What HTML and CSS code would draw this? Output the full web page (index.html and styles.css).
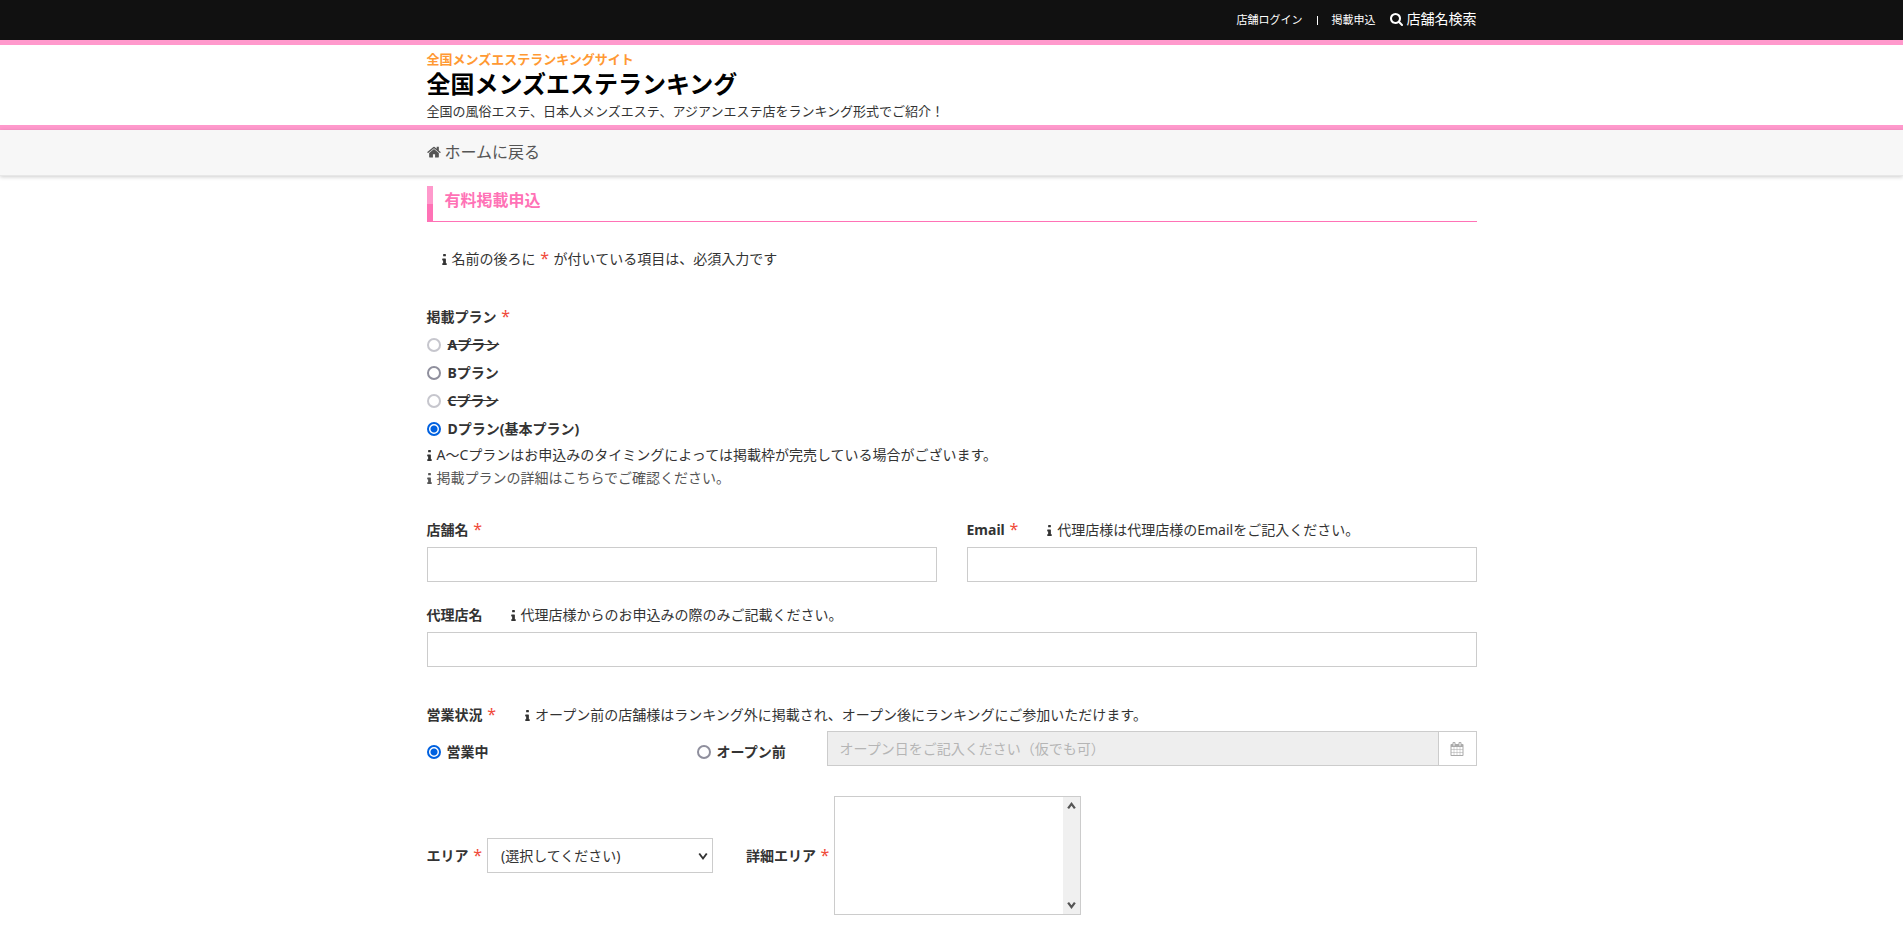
FILE: index.html
```html
<!DOCTYPE html>
<html lang="ja">
<head>
<meta charset="utf-8">
<meta name="viewport" content="width=device-width, initial-scale=1">
<title>有料掲載申込 | 全国メンズエステランキング</title>
<link rel="stylesheet" href="styles.css">
</head>
<body>
<svg class="sprite" aria-hidden="true">
  <symbol id="icon-info" viewBox="0 0 640 1536"><path d="M640 1344v128q0 26-19 45t-45 19H64q-26 0-45-19t-19-45v-128q0-26 19-45t45-19h64V896H64q-26 0-45-19T0 832V704q0-26 19-45t45-19h384q26 0 45 19t19 45v576h64q26 0 45 19t19 45zM512 64v192q0 26-19 45t-45 19H192q-26 0-45-19t-19-45V64q0-26 19-45T192 0h256q26 0 45 19t19 45z"/></symbol>
  <symbol id="icon-search" viewBox="0 0 1664 1664"><path d="M1152 704q0-185-131.500-316.500T704 256 387.500 387.500 256 704t131.500 316.500T704 1152t316.500-131.500T1152 704zm512 832q0 52-38 90t-90 38q-54 0-90-38l-343-342q-179 124-399 124-143 0-273.500-55.500t-225-150-150-225T0 704t55.500-273.500 150-225 225-150T704 0t273.500 55.500 225 150 150 225T1408 704q0 220-124 399l343 343q37 37 37 90z"/></symbol>
  <symbol id="icon-home" viewBox="0 0 1664 1312"><path d="M1408 768v480q0 26-19 45t-45 19H960V928H704v384H320q-26 0-45-19t-19-45V768q0-1 .5-3t.5-3l575-474 575 474q1 2 1 6zm223-69l-62 74q-8 9-21 11h-3q-13 0-21-7L832 200 140 777q-12 8-24 7-13-2-21-11l-62-74q-8-10-7-23.500T37 654L756 55q32-26 76-26t76 26l244 204V64q0-14 9-23t23-9h192q14 0 23 9t9 23v408l219 182q10 8 11 21.500t-7 23.500z"/></symbol>
  <symbol id="icon-calendar" viewBox="0 0 1664 1792"><path d="M128 1664h288v-288H128v288zm352 0h320v-288H480v288zm-352-352h288V992H128v320zm352 0h320V992H480v320zM128 928h288V640H128v288zm736 736h320v-288H864v288zM480 928h320V640H480v288zm768 736h288v-288h-288v288zm-384-352h320V992H864v320zM512 448V160q0-32-32-32h-64q-32 0-32 32v288q0 32 32 32h64q32 0 32-32zm736 864h288V992h-288v320zM864 928h320V640H864v288zm384 0h288V640h-288v288zm32-480V160q0-32-32-32h-64q-32 0-32 32v288q0 32 32 32h64q32 0 32-32zm384-64v1280q0 52-38 90t-90 38H128q-52 0-90-38t-38-90V384q0-52 38-90t90-38h128v-96q0-66 47-113T416 0h64q66 0 113 47t47 113v96h384v-96q0-66 47-113t113-47h64q66 0 113 47t47 113v96h128q52 0 90 38t38 90z"/></symbol>
  <symbol id="icon-up" viewBox="0 0 8 8"><path d="M1 6.500l3-4 3 4" fill="none" stroke="currentColor" stroke-width="2"/></symbol>
  <symbol id="icon-down" viewBox="0 0 8 8"><path d="M1 1.500l3 4 3-4" fill="none" stroke="currentColor" stroke-width="2"/></symbol>
  <symbol id="icon-caret" viewBox="0 0 8 8"><path d="M1 2l3 4 3-4" fill="none" stroke="currentColor" stroke-width="1.500"/></symbol>
</svg>

<div class="topbar">
  <nav class="container topbar-nav">
    <a href="#">店舗ログイン</a>
    <span class="divider"></span>
    <a href="#">掲載申込</a>
    <a class="search" href="#"><svg><use href="#icon-search"/></svg>店舗名検索</a>
  </nav>
</div>

<header class="site-header">
  <div class="container">
    <p class="tagline">全国メンズエステランキングサイト</p>
    <p class="site-name">全国メンズエステランキング</p>
    <p class="summary">全国の風俗エステ、日本人メンズエステ、アジアンエステ店をランキング形式でご紹介！</p>
  </div>
</header>

<nav class="breadcrumb">
  <div class="container">
    <a class="home" href="#"><svg><use href="#icon-home"/></svg>ホームに戻る</a>
  </div>
</nav>

<main class="container">
  <h1 class="heading">有料掲載申込</h1>
  <p class="note lead"><svg class="info"><use href="#icon-info"/></svg>名前の後ろに <span class="required">*</span> が付いている項目は、必須入力です</p>

  <form>
    <fieldset class="plans">
      <legend>掲載プラン <span class="required">*</span></legend>
      <label class="choice struck"><input type="radio" name="plan" disabled><span>Aプラン</span></label>
      <label class="choice"><input type="radio" name="plan"><span>Bプラン</span></label>
      <label class="choice struck"><input type="radio" name="plan" disabled><span>Cプラン</span></label>
      <label class="choice"><input type="radio" name="plan" checked><span>Dプラン(基本プラン)</span></label>
      <p class="note"><svg class="info"><use href="#icon-info"/></svg>A～Cプランはお申込みのタイミングによっては掲載枠が完売している場合がございます。</p>
      <p class="note"><a href="#"><svg class="info"><use href="#icon-info"/></svg>掲載プランの詳細はこちらでご確認ください。</a></p>
    </fieldset>

    <div class="columns">
      <div class="field">
        <div class="caption"><label for="shop">店舗名 <span class="required">*</span></label></div>
        <input class="text" id="shop" type="text">
      </div>
      <div class="field">
        <div class="caption"><label for="email">Email <span class="required">*</span></label><span class="hint"><svg class="info"><use href="#icon-info"/></svg>代理店様は代理店様のEmailをご記入ください。</span></div>
        <input class="text" id="email" type="email">
      </div>
    </div>

    <div class="field agency">
      <div class="caption"><label for="agency">代理店名</label><span class="hint"><svg class="info"><use href="#icon-info"/></svg>代理店様からのお申込みの際のみご記載ください。</span></div>
      <input class="text" id="agency" type="text">
    </div>

    <div class="field status" role="group" aria-labelledby="status-label">
      <div class="caption"><span class="label" id="status-label">営業状況 <span class="required">*</span></span><span class="hint"><svg class="info"><use href="#icon-info"/></svg>オープン前の店舗様はランキング外に掲載され、オープン後にランキングにご参加いただけます。</span></div>
      <div class="status-row">
        <label class="choice"><input type="radio" name="status" checked><span>営業中</span></label>
        <label class="choice"><input type="radio" name="status"><span>オープン前</span></label>
        <div class="date">
          <input class="text" type="text" aria-label="オープン日" placeholder="オープン日をご記入ください（仮でも可）" disabled>
          <button type="button" aria-label="カレンダー" disabled><svg><use href="#icon-calendar"/></svg></button>
        </div>
      </div>
    </div>

    <div class="areas">
      <div class="area">
        <label for="area">エリア <span class="required">*</span></label>
        <div class="dropdown">
          <select id="area"><option>(選択してください)</option></select>
          <svg><use href="#icon-caret"/></svg>
        </div>
      </div>
      <div class="area">
        <label for="detail">詳細エリア <span class="required">*</span></label>
        <div class="listbox">
          <select id="detail" multiple></select>
          <div class="track"><svg><use href="#icon-up"/></svg><svg><use href="#icon-down"/></svg></div>
        </div>
      </div>
    </div>
  </form>
</main>
</body>
</html>
```

FILE: styles.css
```css
*, *::before, *::after { box-sizing: border-box; }

body {
  margin: 0;
  background: #fff;
  color: #333;
  font: 14px/24px "Noto Sans", "Noto Sans CJK JP", sans-serif;
}

p, h1, fieldset, legend { margin: 0; padding: 0; border: 0; }
a { color: #555; text-decoration: none; }
svg { fill: currentColor; flex: none; }
.sprite { display: none; }
input, select, button { font: inherit; color: inherit; }

.container {
  width: 100%;
  max-width: 1050px;
  margin: 0 auto;
}

.topbar { background: #111; }
.topbar-nav {
  display: flex;
  align-items: center;
  justify-content: flex-end;
  height: 40px;
  font-size: 11px;
}
.topbar a { color: #fff; }
.divider {
  width: 1px;
  height: 9px;
  margin: 0 14px;
  background: #fff;
}
.topbar .search {
  display: flex;
  align-items: center;
  gap: 4px;
  margin-left: 14px;
  padding-bottom: 2px;
  font-size: 14px;
}
.search svg { width: 13px; height: 13px; }

.site-header {
  border: solid #f9c;
  border-width: 5px 0;
  padding: 4px 0 1px;
}
.tagline { color: #f93; font-size: 13px; font-weight: bold; line-height: 20px; }
.site-name { color: #000; font-size: 24px; font-weight: bold; line-height: 30px; }
.summary { font-size: 13px; line-height: 25px; }

.breadcrumb {
  background: #f7f7f7;
  border-bottom: 1px solid #e7e7e7;
  box-shadow: 0 1px 4px rgba(0, 0, 0, .2);
}
.home {
  display: inline-flex;
  align-items: center;
  gap: 4px;
  height: 45px;
  padding-bottom: 2px;
  font-size: 16px;
  vertical-align: top;
}
.home svg { width: 14px; height: 12px; }

.heading {
  position: relative;
  margin-top: 10px;
  padding: 0 0 7px 18px;
  border-bottom: 1px solid #ff72b6;
  color: #ff72b6;
  font-size: 16px;
  line-height: 28px;
}
.heading::before {
  content: "";
  position: absolute;
  left: 0;
  top: 0;
  bottom: -1px;
  width: 6px;
  background: linear-gradient(#f9c 50%, #ff72b6 50%);
}

.required { margin: 0 1px; color: #f04b3a; font-size: 16px; font-weight: normal; line-height: 1; }
.info { width: 5px; height: 11px; margin-right: 5px; vertical-align: -1px; }
.note { line-height: 23px; }
.lead { margin: 25px 0 33px; padding-left: 15px; }

label, legend, .label { font-weight: bold; }
legend, .plans .choice { line-height: 28px; }
.choice {
  display: flex;
  align-items: center;
  gap: 7px;
}
.struck span { text-decoration: line-through; }

input[type="radio"] {
  appearance: none;
  width: 14px;
  height: 14px;
  margin: 0;
  border: 2px solid #8f8f9d;
  border-radius: 50%;
  background: #fff;
}
input[type="radio"]:checked {
  border-color: #0061e0;
  background: radial-gradient(circle, #0061e0 3px, #fff 4px);
}
input[type="radio"]:disabled { opacity: .5; }

.columns {
  display: grid;
  grid-template-columns: 1fr 1fr;
  gap: 30px;
  margin-top: 29px;
}
.caption { margin-bottom: 5px; }
.hint { margin-left: 28px; }
.text {
  display: block;
  width: 100%;
  height: 35px;
  padding: 0 12px;
  border: 1px solid #ccc;
  border-radius: 0;
  background: #fff;
}
.agency { margin-top: 21px; }
.status { margin-top: 36px; }
.status .caption { margin-bottom: 4px; }

.status-row {
  display: grid;
  grid-template-columns: 270px 130px 1fr;
}
.status-row .choice { gap: 6px; padding-top: 6px; }
.date { display: flex; }
.date .text { background: #eee; }
.text::placeholder { color: #b5b5b5; opacity: 1; }
.date button {
  display: flex;
  align-items: center;
  justify-content: center;
  width: 38px;
  padding: 0;
  border: 1px solid #ccc;
  border-left: 0;
  background: #fff;
  color: #aaa;
  flex: none;
}
.date button svg { width: 14px; height: 14px; }

.areas {
  display: flex;
  gap: 33px;
  margin: 30px 0 22px;
}
.area { display: flex; align-items: center; gap: 4px; }
.dropdown { display: grid; width: 226px; align-items: center; }
.dropdown > * { grid-area: 1 / 1; }
.dropdown select {
  appearance: none;
  width: 100%;
  height: 35px;
  padding: 0 28px 0 13px;
  border: 1px solid #ccc;
  border-radius: 0;
  background: #fff;
}
.dropdown svg {
  justify-self: end;
  width: 10px;
  height: 10px;
  margin-right: 5px;
  pointer-events: none;
}
.listbox {
  display: flex;
  width: 247px;
  height: 119px;
  border: 1px solid #ccc;
}
.listbox select {
  flex: 1;
  min-width: 0;
  height: 100%;
  padding: 0;
  border: 0;
  background: #fff;
  overflow: hidden;
}
.track {
  display: flex;
  flex-direction: column;
  justify-content: space-between;
  align-items: center;
  width: 17px;
  padding: 4px 0;
  background: #f0f0f0;
  color: #555;
}
.track svg { width: 9px; height: 9px; }
```
